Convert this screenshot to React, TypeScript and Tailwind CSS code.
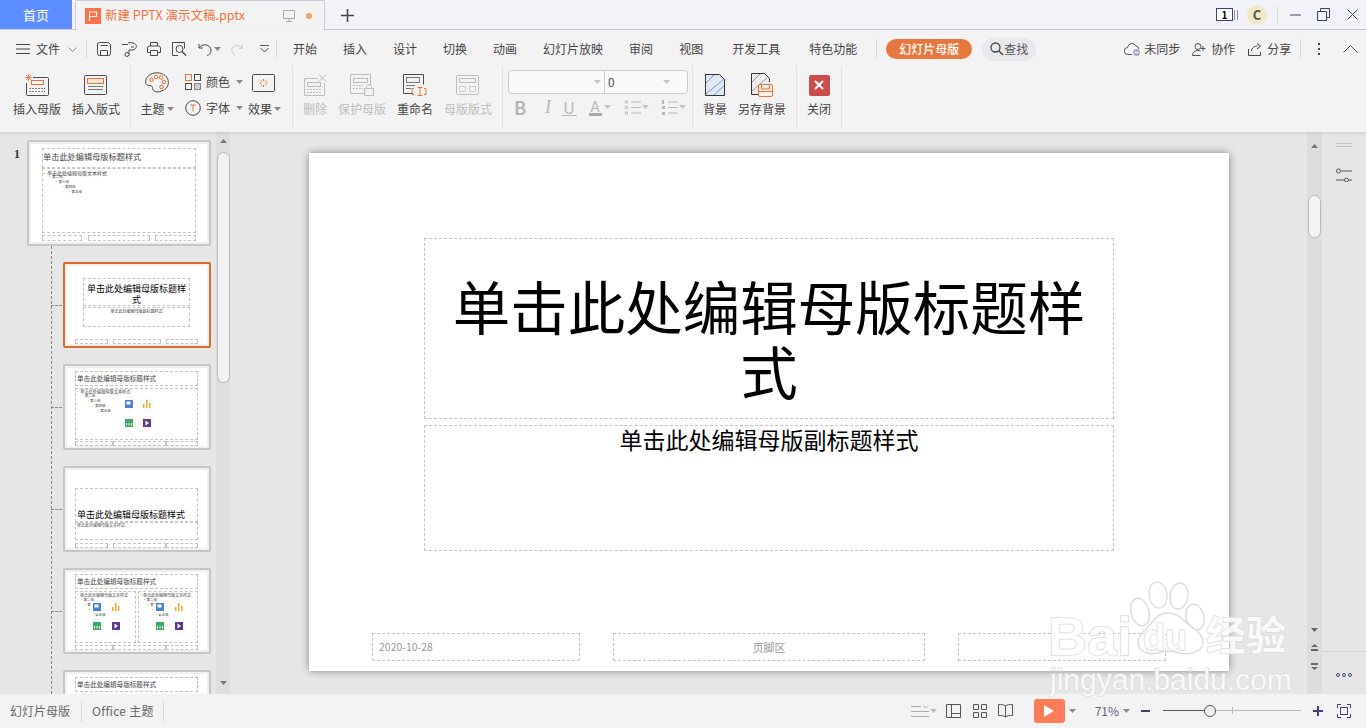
import type { ReactNode } from 'react'

const INK = '#4a4a4a'
const FADED = '#bdbdbd'
const ORANGE = '#e0763c'

function Caret({ color = '#888', className = '' }: { color?: string; className?: string }) {
  return (
    <svg width="7" height="4" viewBox="0 0 7 4" className={className}>
      <path d="M0 0h7L3.500 4z" fill={color} />
    </svg>
  )
}

function Icon({ w, h, children, className = '' }: { w: number; h: number; children: ReactNode; className?: string }) {
  return (
    <svg width={w} height={h} viewBox={`0 0 ${w} ${h}`} fill="none" stroke={INK} strokeWidth="1" className={`shrink-0 ${className}`}>
      {children}
    </svg>
  )
}

// ---- ribbon icons
const InsertMaster = () => (
  <Icon w={24} h={22}>
    <path d="M8 3.500h14.500a1 1 0 0 1 1 1v16a1 1 0 0 1-1 1h-20a1 1 0 0 1-1-1V9" />
    <rect x="6.500" y="6.500" width="12" height="4" stroke={ORANGE} />
    <path d="M4 14.500h16M4 17.500h16" strokeDasharray="2 1" stroke="#888" />
    <path d="M0 3.500h7M3.500 0v7M1 1l5 5M6 1L1 6" stroke={ORANGE} strokeWidth=".8" />
  </Icon>
)
const InsertLayout = () => (
  <Icon w={24} h={20}>
    <rect x=".5" y=".5" width="22" height="19" rx="1" />
    <rect x="3.500" y="3.500" width="16" height="5" stroke={ORANGE} fill="#f6e6da" />
    <path d="M4 11.500h15M4 14.500h15" stroke="#777" />
  </Icon>
)
const Palette = () => (
  <Icon w={24} h={21}>
    <path d="M12 .8C5.500.8.6 4.800.6 10c0 3.500 3 3.200 5.200 3.600 2.200.4 1.200 2.600 2.400 4.600 1.200 1.800 4 2 6.600 1.400 4.800-1.200 8.600-4.400 8.600-9C23.400 4.600 18.500.8 12 .8z" />
    <g stroke={ORANGE} fill="#fbeee4">
      <circle cx="6.500" cy="8" r="1.800" /><circle cx="11" cy="5" r="1.800" /><circle cx="16" cy="5.500" r="1.800" />
      <circle cx="19" cy="10" r="1.800" /><circle cx="16.500" cy="15" r="1.800" />
    </g>
  </Icon>
)
const Colors = () => (
  <Icon w={16} h={16}>
    <rect x=".5" y=".5" width="6" height="6" stroke={ORANGE} fill="#fbeee4" />
    <rect x="9.500" y=".5" width="6" height="6" />
    <rect x=".5" y="9.500" width="6" height="6" />
    <rect x="9.500" y="9.500" width="6" height="6" stroke="#888" fill="#ccc" />
  </Icon>
)
const FontT = () => (
  <Icon w={16} h={16}>
    <circle cx="8" cy="8" r="7.300" />
    <path d="M5 5h6M8 5v6.500" stroke={ORANGE} />
  </Icon>
)
const Effects = () => (
  <Icon w={23} h={18}>
    <rect x=".5" y=".5" width="22" height="17" rx="1" />
    <path d="M11.500 5v2M11.500 11v2M7.500 9h2M13.500 9h2M8.700 6.200l1.400 1.400M13 10.500l1.400 1.400M14.400 6.200L13 7.600M10 10.500l-1.400 1.400" stroke={ORANGE} />
  </Icon>
)
const Del = () => (
  <Icon w={24} h={22}>
    <g stroke={FADED}>
      <path d="M15 4.500H1.500v17h20V9" />
      <rect x="4.500" y="8.500" width="13" height="4" />
      <path d="M4 15.500h15M4 18.500h15" strokeDasharray="2 1" />
      <path d="M16 .5l7 7M23 .5l-7 7" />
    </g>
  </Icon>
)
const Protect = () => (
  <Icon w={24} h={22}>
    <g stroke={FADED}>
      <path d="M15 19.500H.5V.5h20v11" />
      <rect x="3.500" y="4.500" width="14" height="4" />
      <path d="M3 11.500h10M3 14.500h10" strokeDasharray="2 1" />
      <rect x="14.500" y="14.500" width="9" height="7" />
      <path d="M16.500 14v-2a3 3 0 0 1 5 0v2" />
    </g>
  </Icon>
)
const Rename = () => (
  <Icon w={24} h={22}>
    <path d="M10 19.500H.5V.5h20v10" />
    <rect x="3.500" y="3.500" width="13" height="5" stroke="#777" />
    <path d="M3 11.500h9M3 14.500h5" stroke="#777" />
    <path d="M9 14.500v6h2M23 14.500v6h-2M9 14.500h2M23 14.500h-2M14.500 13.500h5M17 13.500v8M14.500 21.500h5" stroke={ORANGE} />
  </Icon>
)
const MasterLayout = () => (
  <Icon w={24} h={20}>
    <g stroke={FADED}>
      <rect x=".5" y=".5" width="22" height="19" rx="1" />
      <rect x="3.500" y="3.500" width="16" height="4" />
      <path d="M3.500 11.500h6v5h-6zM13.500 11.500h6v5h-6z" strokeDasharray="2 1" />
    </g>
  </Icon>
)
const Background = () => (
  <Icon w={20} h={22}>
    <path d="M.5.5h14l5 5v16H.5z" fill="#e2e8f3" stroke="#333" />
    <path d="M1 9L9 1M1 20L19 5M9 21l10-9" stroke="#6f97d8" />
  </Icon>
)
const SaveBackground = () => (
  <Icon w={22} h={24}>
    <path d="M15 21.500H.5V.5h13l5 5V9" stroke="#333" fill="#eee" />
    <path d="M1 9L9 1M1 18L16 5" stroke="#999" />
    <rect x="7.500" y="11.500" width="14" height="12" rx="1.500" stroke={ORANGE} fill="#fbeee4" />
    <path d="M10.500 12v4h8v-4M7.500 18.500h14" stroke={ORANGE} />
  </Icon>
)

function RibbonButton({ icon, label, w, faded }: { icon: ReactNode; label: string; w: number; faded?: boolean }) {
  return (
    <button
      type="button"
      className={`flex h-[60px] flex-col items-center justify-between pb-[9px] pt-[6px] text-[12px] leading-[16px] ${faded ? 'text-[#bdbdbd]' : 'text-[#444]'}`}
      style={{ width: w }}
    >
      <span className="flex h-[26px] items-center">{icon}</span>
      <span>{label}</span>
    </button>
  )
}

const RibbonSep = () => <div className="h-[62px] w-px bg-[#e2e2e2]" />

function Ribbon() {
  return (
    <div className="flex h-[66px] items-start">
      <div className="ml-[13px] flex gap-[11px]">
        <RibbonButton icon={<InsertMaster />} label="插入母版" w={48} />
        <RibbonButton icon={<InsertLayout />} label="插入版式" w={48} />
      </div>
      <div className="ml-[10px]"><RibbonSep /></div>
      <div className="ml-[6px] flex h-[60px] w-[155px] text-[12px] text-[#444]">
        <div className="flex w-[40px] flex-col items-center justify-between pb-[9px] pt-[6px] leading-[16px]">
          <Palette />
          <span className="flex items-center gap-[2px] whitespace-nowrap">主题<Caret /></span>
        </div>
        <div className="ml-[8px] flex w-[58px] flex-col justify-between pb-[10px] pt-[8px] leading-[16px]">
          <span className="flex items-center gap-[5px] whitespace-nowrap"><Colors />颜色<Caret className="ml-[1px]" /></span>
          <span className="flex items-center gap-[5px] whitespace-nowrap"><FontT />字体<Caret className="ml-[1px]" /></span>
        </div>
        <div className="ml-[5px] flex w-[37px] flex-col items-start justify-between pb-[9px] pt-[8px] leading-[16px]">
          <span className="ml-[4px]"><Effects /></span>
          <span className="flex items-center gap-[2px] whitespace-nowrap">效果<Caret /></span>
        </div>
      </div>
      <RibbonSep />
      <div className="ml-[10px] flex gap-[11px]">
        <RibbonButton icon={<Del />} label="删除" w={24} faded />
        <RibbonButton icon={<Protect />} label="保护母版" w={48} faded />
        <RibbonButton icon={<Rename />} label="重命名" w={36} />
        <RibbonButton icon={<MasterLayout />} label="母版版式" w={48} faded />
      </div>
      <div className="ml-[10px]"><RibbonSep /></div>
      <FontBlock />
      <div className="ml-[4px]"><RibbonSep /></div>
      <div className="ml-[10px] flex gap-[11px]">
        <RibbonButton icon={<Background />} label="背景" w={24} />
        <RibbonButton icon={<SaveBackground />} label="另存背景" w={48} />
      </div>
      <div className="ml-[10px]"><RibbonSep /></div>
      <div className="ml-[10px]">
        <RibbonButton
          w={24}
          label="关闭"
          icon={
            <span className="flex h-[21px] w-[21px] items-center justify-center rounded-[2px] bg-[#cc4b4c]">
              <svg width="10" height="10" viewBox="0 0 10 10"><path d="M1 1l8 8M9 1L1 9" stroke="#fff" strokeWidth="2" /></svg>
            </span>
          }
        />
      </div>
      <div className="ml-[10px]"><RibbonSep /></div>
    </div>
  )
}

function FontBlock() {
  return (
    <div className="ml-[5px] flex w-[180px] flex-col">
      <div className="mt-[4px] flex h-[24px] items-center rounded-[4px] border border-[#ccc] bg-[#f9f9f9] text-[12px] text-[#555]">
        <div className="flex h-full w-[96px] items-center justify-end border-r border-[#ccc] pr-[3px]"><Caret color="#c4c4c4" /></div>
        <div className="flex flex-1 items-center justify-between pl-[3px] pr-[17px]"><span>0</span><Caret color="#c4c4c4" /></div>
      </div>
      <div className="mt-[2px] flex h-[22px] items-center pl-[6px] text-[#b8b8b8]">
        <span className="w-[22px] text-[18px] font-bold leading-none">B</span>
        <span className="ml-[9px] w-[12px] font-['Liberation_Serif',serif] text-[18px] italic leading-none">I</span>
        <span className="ml-[1px] flex w-[22px] flex-col items-center">
          <span className="text-[16px] leading-[16px]">U</span>
          <span className="h-px w-[15px] bg-[#b8b8b8]" />
        </span>
        <span className="ml-[8px] flex w-[14px] flex-col items-center">
          <span className="text-[15px] leading-[14px]">A</span>
          <span className="h-[3px] w-[13px] bg-[#aaa]" />
        </span>
        <Caret color="#c4c4c4" className="ml-[2px]" />
        <ListIcon />
        <Caret color="#c4c4c4" className="ml-[1px]" />
        <ListIcon numbered />
        <Caret color="#c4c4c4" className="ml-[1px]" />
      </div>
    </div>
  )
}

function ListIcon({ numbered }: { numbered?: boolean }) {
  return (
    <svg width="17" height="17" viewBox="0 0 17 17" className={numbered ? 'ml-[12px]' : 'ml-[13px]'}>
      <path d="M7 3h10M7 8.500h10M7 14h10" stroke="#b8b8b8" />
      {numbered ? (
        <g fill="#b8b8b8"><rect x="1" y="1" width="2" height="4" /><rect x="1" y="7" width="3" height="3" /><rect x="1" y="13" width="3" height="3" /></g>
      ) : (
        <g fill="none" stroke="#b8b8b8"><circle cx="2.500" cy="3" r="1.300" /><circle cx="2.500" cy="8.500" r="1.300" /><circle cx="2.500" cy="14" r="1.300" /></g>
      )}
    </svg>
  )
}

function TabBar() {
  return (
    <div className="flex h-[30px] items-stretch border-b border-[#c9cddb] bg-[#f1f3f8]">
      <div className="flex h-[29px] w-[72px] items-center justify-center bg-[#5c8dfe] text-[13px] text-white">首页</div>
      <div className="relative z-10 ml-[3px] flex h-[30px] w-[250px] items-center rounded-t-[2px] border-x border-t border-[#c9cddb] bg-[#f3f3f3] pl-[9px]">
        <span className="flex h-[16px] w-[16px] items-center justify-center bg-[#fb7249]">
          <svg width="10" height="10" viewBox="0 0 10 10" fill="none"><path d="M1.500 10V1h7v4.500h-7" stroke="#fff" strokeWidth="1.100" /></svg>
        </span>
        <span className="ml-[4px] whitespace-nowrap text-[12.500px] text-[#f0743f]">新建 PPTX 演示文稿.pptx</span>
        <svg width="12" height="12" viewBox="0 0 12 12" fill="none" className="ml-auto"><path d="M.5.5h11v8H.5zM6 8.500v3M3 11.500h6" stroke="#aaa" /></svg>
        <span className="ml-[11px] mr-[12px] h-[6px] w-[6px] rounded-full bg-[#f4a15e]" />
      </div>
      <svg width="13" height="13" viewBox="0 0 13 13" className="ml-[16px] mt-[9px]"><path d="M6.500 0v13M0 6.500h13" stroke="#444" strokeWidth="1.500" /></svg>
      <div className="ml-auto flex items-center">
        <span className="flex h-[13px] w-[17px] items-center justify-center border border-[#39456b] bg-white text-[10px] font-bold leading-none text-black">1</span>
        <span className="ml-[1px] h-[10px] w-[4px] border-x border-[#8a90a5]" />
        <span className="ml-[9px] flex h-[20px] w-[20px] items-center justify-center rounded-full bg-[#efe9c9] text-[13px] font-bold leading-none text-[#57534a]">C</span>
        <span className="ml-[10px] h-[18px] w-px bg-[#dcdfe8]" />
        <svg width="11" height="2" viewBox="0 0 11 2" className="ml-[12px]"><path d="M0 1h11" stroke="#39456b" /></svg>
        <svg width="13" height="13" viewBox="0 0 13 13" fill="none" className="ml-[16px]"><path d="M.5 3.500h9v9h-9zM3.500 3.500v-3h9v9h-3" stroke="#39456b" /></svg>
        <svg width="11" height="11" viewBox="0 0 11 11" className="ml-[17px] mr-[8px]"><path d="M.5.5l10 10M10.500.5l-10 10" stroke="#39456b" /></svg>
      </div>
    </div>
  )
}

function MenuBar() {
  const tabs: [string, string][] = [
    ['开始', 'ml-[16px]'],
    ['插入', 'ml-[26px]'],
    ['设计', 'ml-[26px]'],
    ['切换', 'ml-[26px]'],
    ['动画', 'ml-[26px]'],
    ['幻灯片放映', 'ml-[26px]'],
    ['审阅', 'ml-[26px]'],
    ['视图', 'ml-[26px]'],
    ['开发工具', 'ml-[29px]'],
    ['特色功能', 'ml-[29px]'],
  ]
  return (
    <div className="flex h-[36px] items-center pt-[2px] text-[12px] text-[#444]">
      <svg width="14" height="10" viewBox="0 0 14 10" className="ml-[16px]"><path d="M0 .5h14M0 5h14M0 9.500h14" stroke="#444" /></svg>
      <span className="ml-[6px]">文件</span>
      <svg width="9" height="5" viewBox="0 0 9 5" fill="none" className="ml-[8px]"><path d="M.5.5l4 4 4-4" stroke="#888" /></svg>
      <span className="ml-[9px] h-[18px] w-px bg-[#ddd]" />
      <Icon w={14} h={14} className="ml-[10px]"><path d="M.5 2.500a2 2 0 0 1 2-2h9l2 2v9a2 2 0 0 1-2 2h-9a2 2 0 0 1-2-2zM3.500 13.500v-5h7v5M3.500 3.500h7" /></Icon>
      <Icon w={16} h={15} className="ml-[11px]"><path d="M0 2.500h6M6 1a6 5 0 0 1 5 0c5 1 4 6 0 7H7v4M9 5h3" /><circle cx="5" cy="12.500" r="2" /></Icon>
      <Icon w={14} h={14} className="ml-[9px]"><path d="M3.500 4V.5h7V4M3.500 10.500H.5V6a2 2 0 0 1 2-2h9a2 2 0 0 1 2 2v4.500h-3M3.500 8.500h7v5h-7z" /></Icon>
      <Icon w={15} h={14} className="ml-[11px]"><path d="M6 13.500H.5V.5h12v6" /><circle cx="7.500" cy="7" r="3.500" /><path d="M10 9.500l4 4" strokeWidth="1.500" /></Icon>
      <Icon w={14} h={13} className="ml-[11px]"><path d="M1 1v4h4M1 5c3-5 12-4 12 2.500 0 3-2 4.500-4 5" /></Icon>
      <Caret className="ml-[2px]" />
      <svg width="12" height="13" viewBox="0 0 14 13" fill="none" className="ml-[10px]"><path d="M13 1v4H9M13 5C10 0 1 1 1 7.500c0 3 2 4.500 4 5" stroke="#c4c4c4" /></svg>
      <svg width="9" height="8" viewBox="0 0 9 8" fill="none" className="ml-[17px]"><path d="M0 .5h9M.5 3l4 4 4-4" stroke="#555" /></svg>
      <span className="ml-[7px] h-[18px] w-px bg-[#ddd]" />
      {tabs.map(([t, m]) => (
        <span key={t} className={`${m} whitespace-nowrap`}>{t}</span>
      ))}
      <span className="ml-[19px] h-[20px] w-px bg-[#ddd]" />
      <span className="ml-[9px] flex h-[20px] w-[86px] items-center justify-center rounded-full bg-[#e8773f] font-medium text-white">幻灯片母版</span>
      <span className="ml-[10px] flex h-[23px] w-[54px] items-center rounded-full bg-[#e8e9ec] pl-[8px]">
        <svg width="14" height="14" viewBox="0 0 14 14" fill="none"><circle cx="5.500" cy="5.500" r="4.500" stroke="#444" strokeWidth="1.300" /><path d="M9 9l4 4" stroke="#444" strokeWidth="1.500" /></svg>
        <span className="text-[#555]">查找</span>
      </span>
      <svg width="17" height="14" viewBox="0 0 17 14" fill="none" className="ml-[88px]"><path d="M8 12.500H4a3.500 3.500 0 0 1-.5-7 4.500 4.500 0 0 1 8.500-1.500 4 4 0 0 1 3 3" stroke="#555" /><circle cx="12.500" cy="10.500" r="3.500" fill="#a8aebc" /><path d="M10.500 10.500h4" stroke="#fff" /></svg>
      <span className="ml-[3px] whitespace-nowrap">未同步</span>
      <svg width="15" height="13" viewBox="0 0 15 13" fill="none" className="ml-[12px]"><circle cx="6" cy="3.500" r="3" stroke="#555" /><path d="M.5 12.500c0-3 2-5 5.500-5 1 0 2 .2 2.500.5M.5 12.500h8M11 3v5M8.500 5.500h5" stroke="#555" /></svg>
      <span className="ml-[4px] whitespace-nowrap">协作</span>
      <svg width="14" height="13" viewBox="0 0 14 13" fill="none" className="ml-[13px]"><path d="M.5 6v6.500h12V9M3.500 8c0-3 3-5 6-5M9 .5L12.500 3 9 6" stroke="#444" /></svg>
      <span className="ml-[5px] whitespace-nowrap">分享</span>
      <span className="ml-[9px] h-[20px] w-px bg-[#ddd]" />
      <span className="ml-[17px] flex flex-col gap-[3px]">
        <span className="h-[2px] w-[2px] bg-[#444]" /><span className="h-[2px] w-[2px] bg-[#444]" /><span className="h-[2px] w-[2px] bg-[#444]" />
      </span>
      <svg width="15" height="8" viewBox="0 0 15 8" fill="none" className="ml-[23px]"><path d="M.5 7.500l7-7 7 7" stroke="#555" /></svg>
    </div>
  )
}

// ---- slide thumbnails; coordinates are page pixels minus the thumb's origin
type Box = [number, number, number, number]

function Dash({ b }: { b: Box }) {
  return <div className="absolute border border-dashed border-[#c4c4c4]" style={{ left: b[0], top: b[1], width: b[2], height: b[3] }} />
}

function Tiny({ x, y, size, children, black, center }: { x: number; y: number; size: number; children: ReactNode; black?: boolean; center?: number }) {
  return (
    <div
      className={`absolute whitespace-nowrap leading-none ${black ? 'text-black' : 'text-[#444]'}`}
      style={{ left: x, top: y, fontSize: size, width: center, textAlign: center ? 'center' : undefined }}
    >
      {children}
    </div>
  )
}

function BodyLevels({ x, y, s = 1, first = 5 }: { x: number; y: number; s?: number; first?: number }) {
  const rows = ['单击此处编辑母版文本样式', '第二级', '第三级', '第四级', '第五级']
  return (
    <>
      {rows.map((r, i) => (
        <Tiny key={r} x={x + i * 6.500 * s} y={y + i * 5} size={i === 0 ? first : 3.500}>
          <span className="text-[#c36a2a]">•</span>{r}
        </Tiny>
      ))}
    </>
  )
}

function ChartGlyph({ kind }: { kind: 'pic' | 'bars' | 'table' | 'video' }) {
  return (
    <svg width="8" height="8" viewBox="0 0 8 8">
      {kind === 'pic' && <><rect width="8" height="8" fill="#4a7fd1" /><rect x="1.500" y="1.500" width="4" height="3" fill="#fff" /></>}
      {kind === 'bars' && <path d="M0 8V4h1.500v4zM3 8V0h1.500v8zM6 8V3h1.500v5z" fill="#f4a91f" />}
      {kind === 'table' && <><rect width="8" height="8" fill="#3fa766" /><path d="M1.500 4v2.500M4 4v2.500M6.500 4v2.500" stroke="#fff" /></>}
      {kind === 'video' && <><rect width="8" height="8" fill="#5c3b8c" /><path d="M2.500 1.500L6 4 2.500 6.500z" fill="#fff" /></>}
    </svg>
  )
}

function ChartIcons({ x, y, dx = 18, dy = 19 }: { x: number; y: number; dx?: number; dy?: number }) {
  const items = [
    ['pic', 0, 0],
    ['bars', dx, 0],
    ['table', 0, dy],
    ['video', dx, dy],
  ] as const
  return (
    <>
      {items.map(([k, ox, oy]) => (
        <div
          key={k}
          className="absolute flex h-[14px] w-[14px] items-center justify-center rounded-full border border-[#f4f4f4] bg-white"
          style={{ left: x + ox - 7, top: y + oy - 7 }}
        >
          <ChartGlyph kind={k} />
        </div>
      ))}
    </>
  )
}

function Footers({ xs }: { xs: Box[] }) {
  return <>{xs.map((b, i) => <Dash key={i} b={b} />)}</>
}

function Thumb({ wide, selected, h = 86, children }: { wide?: boolean; selected?: boolean; h?: number; children: ReactNode }) {
  return (
    <div
      className={`relative box-border shrink-0 overflow-hidden rounded-[2px] border-2 bg-white outline outline-[2px] -outline-offset-[4px] outline-[#f0f0f0] ${selected ? 'border-[#db6b2d]' : 'border-[#c6c6c6]'} ${wide ? 'ml-[27px] w-[184px]' : 'ml-[63px] w-[148px]'}`}
      style={{ height: h }}
    >
      {children}
    </div>
  )
}

const TITLE12 = '单击此处编辑母版标题样式'

function SlidePanel() {
  return (
    <div className="relative flex w-[232px] shrink-0 overflow-hidden">
      <span className="absolute left-[14px] top-[16px] font-['Liberation_Serif',serif] text-[12px] font-bold leading-none text-[#333]">1</span>
      <div className="absolute bottom-0 left-[51px] top-[114px] border-l border-dashed border-[#888]" />
      {[173, 275, 377, 479].map((t) => (
        <div key={t} className="absolute left-[51px] w-[11px] border-t border-dashed border-[#888]" style={{ top: t }} />
      ))}
      <div className="flex flex-col gap-[16px] pt-[8px]">
        <Thumb wide h={106}>
          <Dash b={[13, 6, 154, 20]} />
          <Tiny x={14} y={10} size={8.200}>{TITLE12}</Tiny>
          <Dash b={[13, 26, 154, 65]} />
          <BodyLevels x={13} y={28} />
          <Footers xs={[[13, 93, 40, 6], [59, 93, 62, 6], [126, 93, 41, 6]]} />
        </Thumb>
        <Thumb selected>
          <Dash b={[18, 14, 107, 28]} />
          <Tiny x={18} y={20} size={9} black center={107}>单击此处编辑母版标题样</Tiny>
          <Tiny x={18} y={31} size={9} black center={107}>式</Tiny>
          <Dash b={[18, 43, 107, 20]} />
          <Tiny x={18} y={45} size={4} center={107}>单击此处编辑母版副标题样式</Tiny>
          <Footers xs={[[10, 75, 33, 5], [48, 75, 48, 5], [101, 75, 32, 5]]} />
        </Thumb>
        <Thumb>
          <Dash b={[10, 5, 123, 15]} />
          <Tiny x={12} y={9} size={6.600}>{TITLE12}</Tiny>
          <Dash b={[10, 22, 123, 52]} />
          <BodyLevels x={11} y={23} s={0.8} first={4.200} />
          <ChartIcons x={64} y={38} />
          <Footers xs={[[10, 75, 38, 5], [48, 75, 53, 5], [101, 75, 32, 5]]} />
        </Thumb>
        <Thumb>
          <Dash b={[10, 20, 123, 34]} />
          <Tiny x={12} y={42} size={9} black>{TITLE12}</Tiny>
          <Dash b={[10, 54, 123, 18]} />
          <Tiny x={12} y={55} size={4}>单击此处编辑母版文本样式</Tiny>
          <Footers xs={[[10, 75, 33, 5], [48, 75, 53, 5], [101, 75, 32, 5]]} />
        </Thumb>
        <Thumb>
          <Dash b={[10, 4, 123, 15]} />
          <Tiny x={12} y={8} size={6.600}>{TITLE12}</Tiny>
          <Dash b={[10, 21, 61, 52]} />
          <Dash b={[73, 21, 60, 52]} />
          <BodyLevels x={11} y={23} s={0.6} first={4} />
          <BodyLevels x={74} y={23} s={0.6} first={4} />
          <ChartIcons x={32} y={37} dx={19} />
          <ChartIcons x={95} y={37} dx={19} />
          <Footers xs={[[10, 75, 38, 5], [48, 75, 53, 5], [101, 75, 32, 5]]} />
        </Thumb>
        <Thumb>
          <Dash b={[10, 5, 123, 15]} />
          <Tiny x={12} y={9} size={6.600}>{TITLE12}</Tiny>
          <Dash b={[10, 22, 123, 52]} />
        </Thumb>
      </div>
      <div className="absolute bottom-0 left-[216px] top-0 flex w-[14px] flex-col items-center bg-[#dedede]">
        <svg width="7" height="4" viewBox="0 0 7 4" className="mt-[7px]"><path d="M3.500 0L7 4H0z" fill="#777" /></svg>
        <div className="mt-[9px] h-[231px] w-[13px] rounded-[7px] border border-[#b8b8b8] bg-[#f2f2f2]" />
        <svg width="7" height="4" viewBox="0 0 7 4" className="mb-[9px] mt-auto"><path d="M0 0h7L3.500 4z" fill="#777" /></svg>
      </div>
    </div>
  )
}

function EditCanvas() {
  return (
    <div className="flex min-w-0 flex-1 items-start pl-[77px] pt-[21px]">
      <div className="relative h-[518px] w-[920px] shrink-0 bg-white shadow-[0_0_8px_rgba(0,0,0,0.4)]">
        <div className="absolute left-[115px] top-[85px] flex h-[181px] w-[690px] items-center justify-center border border-dashed border-[#c4c4c4] pt-[18px] text-center text-[57.500px] leading-[65px] text-black">
          单击此处编辑母版标题样式
        </div>
        <div className="absolute left-[115px] top-[272px] h-[126px] w-[690px] border border-dashed border-[#c4c4c4] text-center text-[23px] leading-[26px] text-black">
          单击此处编辑母版副标题样式
        </div>
        <div className="absolute left-[63px] top-[480px] flex h-[28px] w-[208px] items-center border border-dashed border-[#c4c4c4] pl-[6px] text-[10.500px] text-[#999]">2020-10-28</div>
        <div className="absolute left-[304px] top-[480px] flex h-[28px] w-[312px] items-center justify-center border border-dashed border-[#c4c4c4] text-[11px] text-[#999]">页脚区</div>
        <div className="absolute left-[649px] top-[480px] flex h-[28px] w-[208px] items-center justify-end border border-dashed border-[#c4c4c4] pr-[8px] text-[10px] text-[#999]">‹#›</div>
      </div>
    </div>
  )
}

function RightRail() {
  return (
    <>
      <div className="flex w-[15px] shrink-0 flex-col items-center bg-[#dddddd]">
        <svg width="7" height="4" viewBox="0 0 7 4" className="mt-[12px]"><path d="M3.500 0L7 4H0z" fill="#777" /></svg>
        <div className="mt-[47px] h-[43px] w-[13px] rounded-[7px] border border-[#bbb] bg-[#f4f4f4]" />
        <svg width="7" height="4" viewBox="0 0 7 4" className="mt-auto"><path d="M0 0h7L3.500 4z" fill="#666" /></svg>
        <svg width="7" height="7" viewBox="0 0 7 7" className="mt-[12px]"><path d="M3.500 0L7 3H0zM0 5h7v2H0z" fill="#666" /></svg>
        <svg width="7" height="7" viewBox="0 0 7 7" className="mb-[24px] mt-[12px]"><path d="M0 0h7v2H0zM0 4h7L3.500 7z" fill="#666" /></svg>
      </div>
      <div className="flex w-[44px] shrink-0 flex-col items-center">
        <div className="mt-[11px] h-[4px] w-[16px] border-y border-[#c4c4c4]" />
        <svg width="16" height="14" viewBox="0 0 16 14" fill="none" className="mt-[21px]">
          <path d="M5 3h11M0 12h9M12 12h4" stroke="#555" />
          <circle cx="2.500" cy="3" r="2" stroke="#555" />
          <circle cx="10.500" cy="12" r="2" stroke="#555" />
        </svg>
        <div className="mt-auto w-full border-t border-[#d6d6d6] pb-[17px] pt-[21px]">
          <div className="flex justify-center gap-[2px]">
            {[0, 1, 2].map((i) => <span key={i} className="h-[4px] w-[4px] rounded-full border border-[#39456b]" />)}
          </div>
        </div>
      </div>
    </>
  )
}

function StatusBar() {
  return (
    <div className="flex h-[34px] items-center bg-[#f3f3f3] text-[12px] text-[#666]">
      <span className="ml-[10px]">幻灯片母版</span>
      <span className="ml-[11px] h-[22px] w-px bg-[#ddd]" />
      <span className="ml-[10px] tracking-[0.3px]">Office 主题</span>
      <span className="ml-[9px] h-[22px] w-px bg-[#ddd]" />
      <svg width="18" height="13" viewBox="0 0 18 13" fill="none" className="ml-auto"><path d="M0 1.500h10M0 6.500h18M0 11.500h18M12 .5l2.500 2.500L17 .5" stroke="#aaa" /></svg>
      <Caret color="#bbb" className="ml-[1px]" />
      <svg width="15" height="14" viewBox="0 0 15 14" fill="none" className="ml-[9px]"><path d="M.5.5h14v13H.5zM5.500.5v13M5.500 9.500h9" stroke="#555" /></svg>
      <svg width="14" height="14" viewBox="0 0 14 14" fill="none" className="ml-[12px]"><path d="M.5.5h5v5h-5zM8.500.5h5v5h-5zM.5 8.500h5v5h-5zM8.500 8.500h5v5h-5z" stroke="#555" /></svg>
      <svg width="15" height="14" viewBox="0 0 15 14" fill="none" className="ml-[11px]"><path d="M7.500 2C6 .5 3 .5.500.5v11c2.500 0 5.500 0 7 1.500 1.500-1.500 4.500-1.500 7-1.500V.5C12 .5 9 .5 7.500 2zM7.500 2v11" stroke="#555" /></svg>
      <span className="ml-[21px] flex h-[24px] w-[31px] items-center justify-center rounded-[3px] bg-[#fc7b58]">
        <svg width="10" height="12" viewBox="0 0 10 12"><path d="M0 0l10 6-10 6z" fill="#fff" /></svg>
      </span>
      <Caret className="ml-[4px]" />
      <span className="ml-[19px] text-[12px] text-[#5d6478]">71%</span>
      <Caret className="ml-[4px]" />
      <span className="ml-[11px] h-[2px] w-[9px] bg-[#39456b]" />
      <div className="relative ml-[13px] h-[12px] w-[138px]">
        <div className="absolute left-0 top-[5px] h-px w-[47px] bg-[#555]" />
        <div className="absolute left-[47px] right-0 top-[5px] h-px bg-[#bbb]" />
        <div className="absolute left-[69px] top-[2px] h-[7px] w-px bg-[#bbb]" />
        <div className="absolute left-[41px] top-0 h-[12px] w-[12px] rounded-full border border-[#555] bg-[#f3f3f3]" />
      </div>
      <svg width="10" height="10" viewBox="0 0 10 10" className="ml-[12px]"><path d="M5 0v10M0 5h10" stroke="#39456b" strokeWidth="2" /></svg>
      <svg width="14" height="14" viewBox="0 0 14 14" fill="none" className="ml-[14px] mr-[15px]"><path d="M.5 4V.5H4M10 .5h3.500V4M13.500 10v3.500H10M4 13.500H.5V10" stroke="#39456b" /><rect x="3.500" y="3.500" width="7" height="7" stroke="#39456b" /></svg>
    </div>
  )
}

// Baidu jingyan stamp, sits on top of everything
function Watermark() {
  const stroke = '[-webkit-text-stroke:1.500px_#dcdcdc] [paint-order:stroke_fill] text-white/80'
  return (
    <div className="pointer-events-none absolute left-[1046px] top-[580px] h-[120px] w-[250px] font-['Liberation_Sans',sans-serif]">
      <svg width="90" height="80" viewBox="0 0 90 80" className="absolute left-[76px] top-0" fill="#ffffff" fillOpacity=".6" stroke="#dcdcdc" strokeWidth="1.500">
        <ellipse cx="18" cy="32" rx="9" ry="14" transform="rotate(-15 18 32)" />
        <ellipse cx="36" cy="15" rx="9" ry="13" transform="rotate(-8 36 15)" />
        <ellipse cx="57" cy="16" rx="9" ry="13" transform="rotate(10 57 16)" />
        <ellipse cx="73" cy="37" rx="9" ry="13" transform="rotate(-15 73 37)" />
        <path d="M46 33c-11 0-14 8-20 14-6 5-10 10-10 16 1 9 10 12 19 10 7-2 16-2 23 0 11 2 22-1 23-10 1-7-5-12-11-16-8-5-12-14-24-14z" />
      </svg>
      <span className={`absolute left-[2px] top-[29px] text-[54px] font-bold leading-none ${stroke}`}>Bai</span>
      <span className={`absolute left-[97px] top-[40px] text-[36px] font-bold leading-none ${stroke}`}>du</span>
      <span className={`absolute left-[160px] top-[33px] font-['Noto_Sans_CJK_SC',sans-serif] text-[40px] font-bold leading-none ${stroke}`}>经验</span>
      <span className={`absolute left-[4px] top-[85px] whitespace-nowrap text-[30px] leading-none ${stroke}`}>jingyan.baidu.com</span>
    </div>
  )
}

export default function App() {
  return (
    <div className="relative flex h-[728px] w-[1366px] flex-col overflow-hidden bg-[#e6e6e6] font-['Noto_Sans_CJK_SC','Noto_Sans',sans-serif]">
      <TabBar />
      <div className="relative z-10 bg-[#f3f3f3] shadow-[0_1px_3px_rgba(0,0,0,0.12)]">
        <MenuBar />
        <Ribbon />
      </div>
      <div className="flex min-h-0 flex-1">
        <SlidePanel />
        <EditCanvas />
        <RightRail />
      </div>
      <StatusBar />
      <Watermark />
    </div>
  )
}
